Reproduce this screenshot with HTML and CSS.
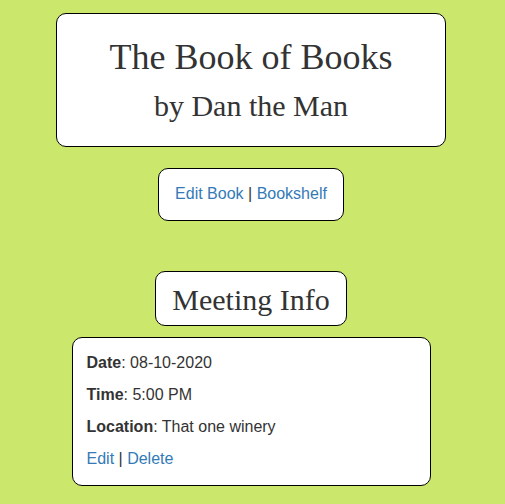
FILE: index.html
```html
<!DOCTYPE html>
<html>
<head>
<meta charset="utf-8">
<link rel="stylesheet" href="styles.css">
</head>
<body>
<div class="page">
  <header class="book-card">
    <h1 class="book-title">The Book of Books</h1>
    <h2 class="book-author">by Dan the Man</h2>
  </header>
  <nav class="book-nav">
    <a href="#">Edit Book</a> | <a href="#">Bookshelf</a>
  </nav>
  <h2 class="section-title">Meeting Info</h2>
  <section class="meeting-card">
    <p><strong>Date</strong>: 08-10-2020</p>
    <p><strong>Time</strong>: 5:00 PM</p>
    <p><strong>Location</strong>: That one winery</p>
    <p><a href="#">Edit</a> | <a href="#">Delete</a></p>
  </section>
</div>
</body>
</html>
```
FILE: styles.css
```css
html, body {
  margin: 0;
  padding: 0;
}
body {
  background: #cce86c;
  color: #333333;
  font-family: "Liberation Sans", Arial, sans-serif;
  font-size: 16px;
  line-height: 22px;
}
a {
  color: #337ab7;
  text-decoration: none;
}
.page {
  width: 502px;
  display: flex;
  flex-direction: column;
  align-items: center;
  padding-top: 13px;
}
.book-card {
  box-sizing: border-box;
  width: 390px;
  height: 134px;
  background: #fff;
  border: 1px solid #000;
  border-radius: 10px;
  text-align: center;
  padding-top: 24px;
  font-family: "Liberation Serif", "Times New Roman", serif;
  font-weight: normal;
}
.book-title {
  margin: 0;
  font-size: 36px;
  line-height: 39.6px;
  font-weight: normal;
}
.book-author {
  margin: 11px 0 0;
  font-size: 30px;
  line-height: 33px;
  font-weight: normal;
}
.book-nav {
  margin-top: 21px;
  background: #fff;
  border: 1px solid #000;
  border-radius: 10px;
  padding: 14px 16px 15px;
}
.section-title {
  margin: 50px 0 0;
  background: #fff;
  border: 1px solid #000;
  border-radius: 10px;
  padding: 11px 16px 9px;
  font-family: "Liberation Serif", "Times New Roman", serif;
  font-size: 30px;
  line-height: 33px;
  font-weight: normal;
}
.meeting-card {
  box-sizing: border-box;
  width: 359px;
  margin-top: 11px;
  background: #fff;
  border: 1px solid #000;
  border-radius: 10px;
  padding: 14px 16px 15px 14px;
}
.meeting-card p {
  margin: 0 0 10px;
}
.meeting-card p:last-child {
  margin-bottom: 0;
}
```
